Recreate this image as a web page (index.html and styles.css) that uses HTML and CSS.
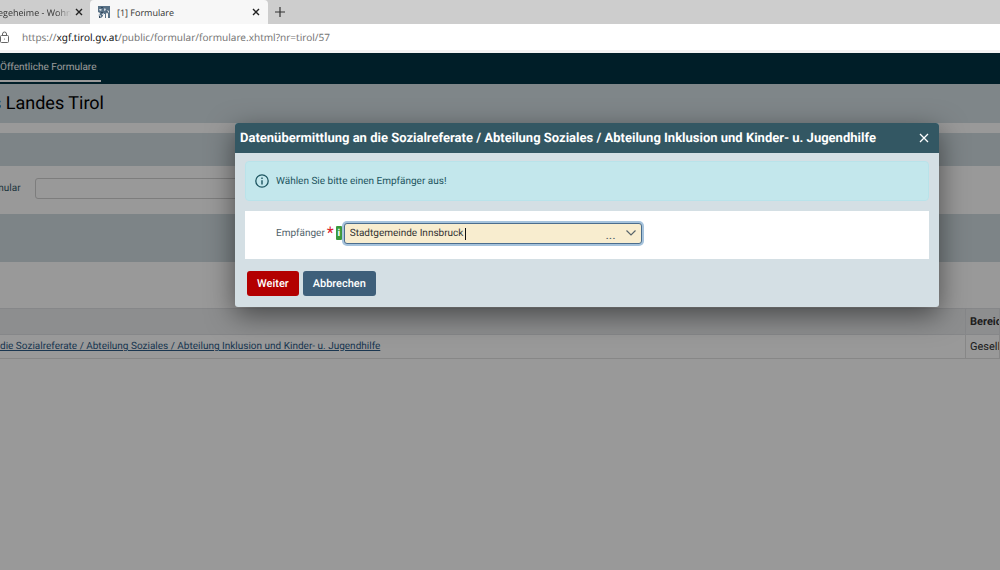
FILE: index.html
```
<!DOCTYPE html>
<html lang="de">
<head>
    <meta charset="UTF-8">
    <meta name="viewport" content="width=device-width, initial-scale=1.0">
    <title>[1] Formulare</title>
    <link rel="stylesheet" href="styles.css">
</head>
<body>
    <div class="tab-bar">
        <div class="tab">
            <span class="tab-title tab-title-fade">egeheime - Wohnu</span>
            <button class="tab-close" aria-label="Tab schließen">
                <svg width="8" height="8" viewBox="0 0 8 8"><path d="M1 1l6 6M7 1l-6 6" stroke="#222" stroke-width="1.4"/></svg>
            </button>
        </div>
        <div class="tab active">
            <svg class="favicon" width="12" height="12" viewBox="0 0 12 12">
                <path fill="#587186" d="M0 0h12v12H10l0-4-1-2-1 2v4H7l0-4-2 0 0 2-2 2H2l1-3-2 1 1-3-2-1z"/>
                <path fill="#d5dde4" d="M1 3l2 0 1 1-2 1zM6 3l1-1 1 2-2 1zM9 4l2 1v2l-1-1zM4 8l2-1v2H4zM0 8l1 1-1 2z"/>
                <path fill="#33485e" d="M3 1h2v1H3zM8 5l2 1-1 1zM3 6h2v1H3zM1 10h1v2H1z"/>
            </svg>
            <span class="tab-title">[1] Formulare</span>
            <button class="tab-close" aria-label="Tab schließen">
                <svg width="8" height="8" viewBox="0 0 8 8"><path d="M1 1l6 6M7 1l-6 6" stroke="#222" stroke-width="1.4"/></svg>
            </button>
        </div>
        <button class="new-tab" aria-label="Neuer Tab">
            <svg width="12" height="12" viewBox="0 0 12 12"><path d="M6 1v10M1 6h10" stroke="#333" stroke-width="1.2"/></svg>
        </button>
    </div>

    <div class="address-bar">
        <svg class="lock" width="10" height="13" viewBox="0 0 10 13" fill="none" stroke="#666">
            <rect x="0.5" y="4.5" width="8" height="7" rx="1"/>
            <path d="M2.5 4.5V3a2 2 0 0 1 4 0v1.5"/>
            <circle cx="4.5" cy="8" r="0.6" fill="#666" stroke="none"/>
        </svg>
        <span class="url">https://<b>xgf.tirol.gv.at</b>/public/formular/formulare.xhtml?nr=tirol/57</span>
    </div>

    <div class="page">
        <nav class="main-nav">
            <a class="nav-link" href="#">Öffentliche Formulare</a>
        </nav>
        <h1 class="page-title">s Landes Tirol</h1>

        <div class="band band-search"></div>
        <div class="search-row">
            <label for="formular">mular</label>
            <input type="text" id="formular">
        </div>
        <div class="band band-list"></div>

        <table class="form-table">
            <thead>
                <tr>
                    <th class="col-name"></th>
                    <th class="col-area">Bereich</th>
                </tr>
            </thead>
            <tbody>
                <tr>
                    <td><a href="#">die Sozialreferate / Abteilung Soziales / Abteilung Inklusion und Kinder- u. Jugendhilfe</a></td>
                    <td class="col-area">Gesellschaft</td>
                </tr>
            </tbody>
        </table>

        <div class="overlay">
            <div class="dialog" role="dialog" aria-labelledby="dialogTitle">
                <div class="dialog-header">
                    <h2 id="dialogTitle">Datenübermittlung an die Sozialreferate / Abteilung Soziales / Abteilung Inklusion und Kinder- u. Jugendhilfe</h2>
                    <button class="dialog-close" aria-label="Schließen">
                        <svg width="10" height="10" viewBox="0 0 10 10"><path d="M1 1l8 8M9 1l-8 8" stroke="#fff" stroke-width="1.3"/></svg>
                    </button>
                </div>
                <div class="dialog-body">
                    <div class="message">
                        <svg width="14" height="14" viewBox="0 0 14 14" fill="none" stroke="#1d5560">
                            <circle cx="7" cy="7" r="6.2" stroke-width="1.3"/>
                            <path d="M7 6.2v4.2M7 3.6v1.5" stroke-width="1.4"/>
                        </svg>
                        <span>Wählen Sie bitte einen Empfänger aus!</span>
                    </div>
                    <div class="field-panel">
                        <label for="empfaenger">Empfänger</label>
                        <span class="required">*</span>
                        <button class="info" aria-label="Info">i</button>
                        <div class="combo">
                            <input type="text" id="empfaenger" value="Stadtgemeinde Innsbruck">
                            <span class="caret"></span>
                            <span class="dots">...</span>
                            <button class="combo-toggle" aria-label="Auswahl öffnen">
                                <svg width="10" height="6" viewBox="0 0 10 6" fill="none"><path d="M0.5 0.5L5 5l4.5-4.5" stroke="#59656b" stroke-width="1.2"/></svg>
                            </button>
                        </div>
                    </div>
                    <div class="actions">
                        <button class="btn btn-primary">Weiter</button>
                        <button class="btn">Abbrechen</button>
                    </div>
                </div>
            </div>
        </div>
    </div>
</body>
</html>
```
FILE: styles.css
```
* {
    box-sizing: border-box;
}

body, html {
    margin: 0;
    height: 100%;
}

body {
    display: flex;
    flex-direction: column;
    overflow: hidden;
    font-family: Roboto, sans-serif;
    font-size: 10px;
    text-rendering: geometricPrecision;
    color: #333;
}

button {
    padding: 0;
    border: none;
    background: none;
    font: inherit;
    text-rendering: inherit;
    cursor: pointer;
}

svg {
    display: block;
    flex-shrink: 0;
}

/* Browserleiste */
.tab-bar {
    display: flex;
    height: 24px;
    flex-shrink: 0;
    background-color: #cdcdcd;
    font-family: "Open Sans", sans-serif;
    font-size: 9px;
    color: #333;
}

.tab {
    display: flex;
    align-items: center;
    width: 90px;
    padding-right: 7px;
}

.tab.active {
    width: 178px;
    padding: 0 8px;
    background-color: #f7f7f7;
    border-radius: 4px 4px 0 0;
}

.tab-title {
    flex: 1;
    overflow: hidden;
    white-space: nowrap;
}

.tab-title-fade {
    margin: 0 4px 0 -2px;
    -webkit-mask-image: linear-gradient(to right, #000 80%, transparent);
    mask-image: linear-gradient(to right, #000 80%, transparent);
}

.favicon {
    margin-right: 7px;
}

.new-tab {
    padding: 0 6px;
}

.address-bar {
    display: flex;
    align-items: center;
    gap: 12px;
    height: 29px;
    flex-shrink: 0;
    background-color: #fff;
    border-bottom: 3px solid #f3f3f3;
    font-family: "Noto Sans", sans-serif;
    font-size: 10px;
    color: #777;
}

.url b {
    font-weight: normal;
    color: #111;
}

/* Seite */
.page {
    position: relative;
    flex: 1;
    overflow: hidden;
    background-color: #fff;
}

.main-nav {
    display: flex;
    height: 31px;
    background-color: #003343;
}

.nav-link {
    height: 29px;
    padding-right: 5px;
    border-bottom: 2px solid #fff;
    line-height: 29px;
    color: #fff;
    text-decoration: none;
}

.page-title {
    height: 39px;
    margin: 0 0 10px;
    background-color: #d4dfe4;
    font-size: 18px;
    font-weight: normal;
    line-height: 39px;
    text-indent: -8px;
    color: #000;
}

.band {
    background-color: #d0dde1;
}

.band-search {
    height: 33px;
}

.band-list {
    height: 48px;
    margin-bottom: 46px;
}

.search-row {
    display: flex;
    align-items: center;
    height: 48px;
    padding-bottom: 4px;
    color: #355968;
}

.search-row label {
    width: 40px;
    margin-left: -5px;
}

.search-row input {
    width: 300px;
    height: 21px;
    border: 1px solid #d0d0d0;
    border-radius: 3px;
}

.form-table {
    width: 100%;
    border-collapse: collapse;
    table-layout: fixed;
    white-space: nowrap;
}

.form-table th {
    height: 26px;
    padding: 0;
    background-color: #ebedef;
    border: 1px solid #dfe2e4;
    border-left: none;
    text-align: left;
}

.form-table td {
    height: 24px;
    padding: 0;
    border: 1px solid #e2e2e2;
    border-left: none;
}

.form-table .col-area {
    width: 34px;
    padding-left: 4px;
    overflow: hidden;
    font-size: 11px;
}

.form-table a {
    color: #2c5a86;
}

/* Dialog */
.overlay {
    position: absolute;
    inset: 0;
    padding: 70px 61px 0 235px;
    background-color: rgba(0, 0, 0, 0.4);
}

.dialog {
    overflow: hidden;
    border-radius: 3px;
    background-color: #d4dfe4;
    box-shadow: 0 8px 28px rgba(0, 0, 0, 0.5);
}

.dialog-header {
    display: flex;
    align-items: center;
    justify-content: space-between;
    height: 30px;
    padding: 0 10px 0 5px;
    background-color: #335763;
    color: #fff;
}

.dialog-header h2 {
    margin: 0;
    font-size: 13px;
    font-weight: bold;
    white-space: nowrap;
}

.dialog-body {
    padding: 8px 10px 11px;
}

.message {
    display: flex;
    align-items: center;
    gap: 7px;
    height: 40px;
    margin-bottom: 10px;
    padding: 0 9px;
    border: 1px solid #b9e3ea;
    border-radius: 4px;
    background-color: #c3e7ec;
    color: #1d5560;
}

.field-panel {
    display: flex;
    align-items: center;
    height: 48px;
    padding: 0 31px 4px;
    background-color: #fff;
    color: #52636b;
}

.required {
    margin-left: 2px;
    font-size: 16px;
    line-height: 12px;
    color: #d9232e;
}

.info {
    display: flex;
    align-items: center;
    justify-content: center;
    width: 6px;
    height: 14px;
    margin: 0 2px;
    border-radius: 1px;
    background-color: #3a9a3c;
    font-weight: bold;
    color: #fff;
}

.combo {
    position: relative;
    display: flex;
    width: 298px;
    height: 21px;
    border: 1px solid #4b6d8d;
    border-radius: 3px;
    background-color: #f8edcf;
    box-shadow: 0 0 0 2px #a6c3dc;
}

.combo input {
    flex: 1;
    min-width: 0;
    padding: 0 5px;
    border: none;
    outline: none;
    background: none;
    font: inherit;
    text-rendering: inherit;
    color: #333;
}

.caret {
    position: absolute;
    top: 4px;
    left: 120px;
    width: 1px;
    height: 12px;
    background-color: #111;
}

.dots {
    position: absolute;
    right: 25px;
    bottom: 0;
    font-size: 13px;
    line-height: 14px;
}

.combo-toggle {
    padding: 0 5px;
}

.actions {
    display: flex;
    gap: 4px;
    padding: 12px 2px 0;
}

.btn {
    height: 25px;
    padding: 0 10px;
    border-radius: 3px;
    background-color: #3e5f7a;
    font-size: 11px;
    font-weight: 500;
    color: #fff;
}

.btn-primary {
    background-color: #b30000;
}
```
